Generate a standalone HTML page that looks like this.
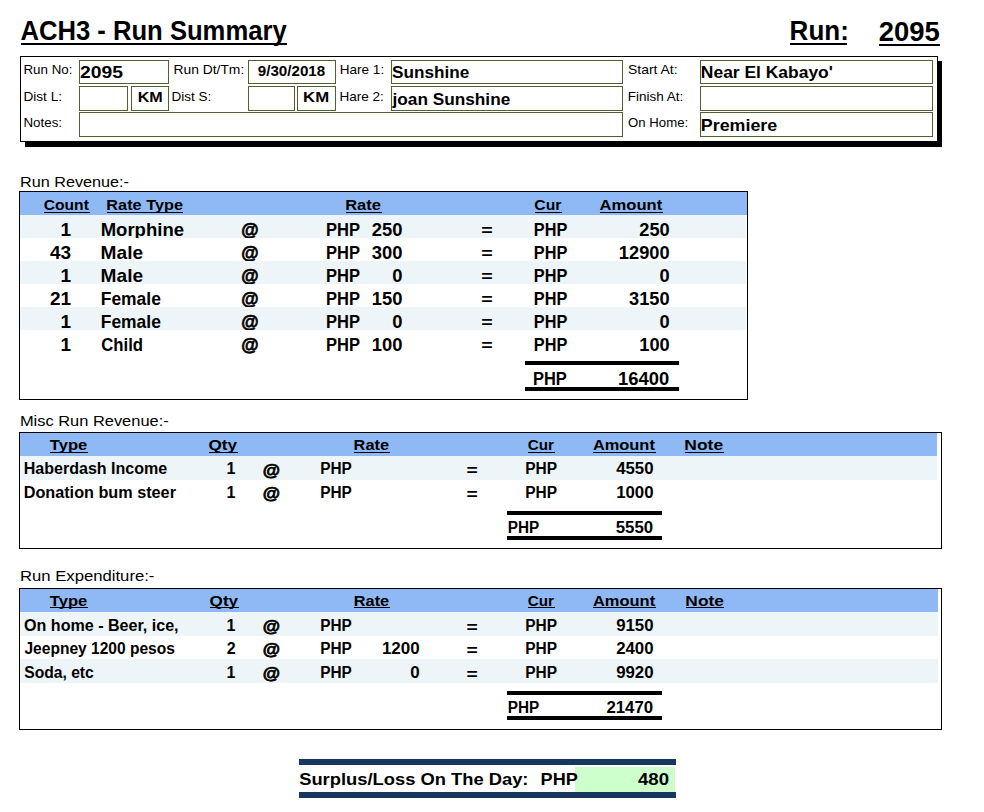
<!DOCTYPE html>
<html><head><meta charset="utf-8"><style>
html,body{margin:0;padding:0;background:#fff;}
body{width:984px;height:812px;overflow:hidden;}
svg{display:block;}
text{font-family:"Liberation Sans",sans-serif;fill:#000;white-space:pre;}
</style></head><body>
<svg width="984" height="812" viewBox="0 0 984 812" shape-rendering="crispEdges">
<text x="20.41" y="40" font-size="27" font-weight="bold" textLength="266.26" lengthAdjust="spacingAndGlyphs">ACH3 - Run Summary</text>
<rect x="21" y="43" width="266" height="2" fill="#000"/>
<text x="789.62" y="40" font-size="27" font-weight="bold" textLength="59.19" lengthAdjust="spacingAndGlyphs">Run:</text>
<rect x="790" y="43" width="57" height="2" fill="#000"/>
<text x="878.81" y="40.8" font-size="27" font-weight="bold" textLength="61.09" lengthAdjust="spacingAndGlyphs">2095</text>
<rect x="879" y="44" width="61" height="2" fill="#000"/>
<rect x="25" y="61" width="917" height="86" fill="#000"/>
<rect x="20" y="56" width="918" height="86" fill="#000"/>
<rect x="21" y="57" width="916" height="84" fill="#fff"/>
<rect x="79" y="60" width="90" height="1" fill="#4e6130"/>
<rect x="79" y="83" width="90" height="1" fill="#4e6130"/>
<rect x="79" y="60" width="1" height="24" fill="#4e6130"/>
<rect x="168" y="60" width="1" height="24" fill="#4e6130"/>
<rect x="79" y="86" width="49" height="1" fill="#4e6130"/>
<rect x="79" y="110" width="49" height="1" fill="#4e6130"/>
<rect x="79" y="86" width="1" height="25" fill="#4e6130"/>
<rect x="127" y="86" width="1" height="25" fill="#4e6130"/>
<rect x="131" y="86" width="38" height="1" fill="#4e6130"/>
<rect x="131" y="110" width="38" height="1" fill="#4e6130"/>
<rect x="131" y="86" width="1" height="25" fill="#4e6130"/>
<rect x="168" y="86" width="1" height="25" fill="#4e6130"/>
<rect x="79" y="112" width="544" height="1" fill="#4e6130"/>
<rect x="79" y="136" width="544" height="1" fill="#4e6130"/>
<rect x="79" y="112" width="1" height="25" fill="#4e6130"/>
<rect x="622" y="112" width="1" height="25" fill="#4e6130"/>
<rect x="248" y="60" width="88" height="1" fill="#4e6130"/>
<rect x="248" y="83" width="88" height="1" fill="#4e6130"/>
<rect x="248" y="60" width="1" height="24" fill="#4e6130"/>
<rect x="335" y="60" width="1" height="24" fill="#4e6130"/>
<rect x="248" y="86" width="47" height="1" fill="#4e6130"/>
<rect x="248" y="110" width="47" height="1" fill="#4e6130"/>
<rect x="248" y="86" width="1" height="25" fill="#4e6130"/>
<rect x="294" y="86" width="1" height="25" fill="#4e6130"/>
<rect x="297" y="86" width="39" height="1" fill="#4e6130"/>
<rect x="297" y="110" width="39" height="1" fill="#4e6130"/>
<rect x="297" y="86" width="1" height="25" fill="#4e6130"/>
<rect x="335" y="86" width="1" height="25" fill="#4e6130"/>
<rect x="391" y="60" width="232" height="1" fill="#4e6130"/>
<rect x="391" y="83" width="232" height="1" fill="#4e6130"/>
<rect x="391" y="60" width="1" height="24" fill="#4e6130"/>
<rect x="622" y="60" width="1" height="24" fill="#4e6130"/>
<rect x="391" y="86" width="232" height="1" fill="#4e6130"/>
<rect x="391" y="110" width="232" height="1" fill="#4e6130"/>
<rect x="391" y="86" width="1" height="25" fill="#4e6130"/>
<rect x="622" y="86" width="1" height="25" fill="#4e6130"/>
<rect x="700" y="60" width="233" height="1" fill="#4e6130"/>
<rect x="700" y="83" width="233" height="1" fill="#4e6130"/>
<rect x="700" y="60" width="1" height="24" fill="#4e6130"/>
<rect x="932" y="60" width="1" height="24" fill="#4e6130"/>
<rect x="700" y="86" width="233" height="1" fill="#4e6130"/>
<rect x="700" y="110" width="233" height="1" fill="#4e6130"/>
<rect x="700" y="86" width="1" height="25" fill="#4e6130"/>
<rect x="932" y="86" width="1" height="25" fill="#4e6130"/>
<rect x="700" y="112" width="233" height="1" fill="#4e6130"/>
<rect x="700" y="136" width="233" height="1" fill="#4e6130"/>
<rect x="700" y="112" width="1" height="25" fill="#4e6130"/>
<rect x="932" y="112" width="1" height="25" fill="#4e6130"/>
<text x="23.47" y="74" font-size="13" textLength="48.95" lengthAdjust="spacingAndGlyphs">Run No:</text>
<text x="23.45" y="100.8" font-size="13" textLength="38.62" lengthAdjust="spacingAndGlyphs">Dist L:</text>
<text x="23.47" y="127" font-size="13" textLength="38.55" lengthAdjust="spacingAndGlyphs">Notes:</text>
<text x="173.43" y="74" font-size="13" textLength="70.85" lengthAdjust="spacingAndGlyphs">Run Dt/Tm:</text>
<text x="171.46" y="100.8" font-size="13" textLength="39.74" lengthAdjust="spacingAndGlyphs">Dist S:</text>
<text x="339.76" y="74" font-size="13" textLength="44.42" lengthAdjust="spacingAndGlyphs">Hare 1:</text>
<text x="339.46" y="100.8" font-size="13" textLength="44.42" lengthAdjust="spacingAndGlyphs">Hare 2:</text>
<text x="628.04" y="74" font-size="13" textLength="49.54" lengthAdjust="spacingAndGlyphs">Start At:</text>
<text x="627.68" y="100.8" font-size="13" textLength="55.54" lengthAdjust="spacingAndGlyphs">Finish At:</text>
<text x="628.07" y="127" font-size="13" textLength="60.07" lengthAdjust="spacingAndGlyphs">On Home:</text>
<text x="80.09" y="77.8" font-size="17" font-weight="bold" textLength="42.91" lengthAdjust="spacingAndGlyphs">2095</text>
<text x="137.66" y="102" font-size="15.5" font-weight="bold" textLength="25.06" lengthAdjust="spacingAndGlyphs">KM</text>
<text x="303.12" y="102" font-size="15.5" font-weight="bold" textLength="26.04" lengthAdjust="spacingAndGlyphs">KM</text>
<text x="257.80" y="75.8" font-size="15" font-weight="bold" textLength="67.39" lengthAdjust="spacingAndGlyphs">9/30/2018</text>
<text x="392.00" y="77.8" font-size="17" font-weight="bold" textLength="77.22" lengthAdjust="spacingAndGlyphs">Sunshine</text>
<text x="392.55" y="104.7" font-size="17" font-weight="bold" textLength="117.71" lengthAdjust="spacingAndGlyphs">joan Sunshine</text>
<text x="700.85" y="77.8" font-size="17" font-weight="bold" textLength="132.06" lengthAdjust="spacingAndGlyphs">Near El Kabayo'</text>
<text x="700.82" y="130.8" font-size="17" font-weight="bold" textLength="76.43" lengthAdjust="spacingAndGlyphs">Premiere</text>
<text x="19.95" y="186.7" font-size="15" textLength="109.04" lengthAdjust="spacingAndGlyphs">Run Revenue:-</text>
<text x="19.93" y="425.8" font-size="15" textLength="148.77" lengthAdjust="spacingAndGlyphs">Misc Run Revenue:-</text>
<text x="19.91" y="580.8" font-size="15" textLength="134.51" lengthAdjust="spacingAndGlyphs">Run Expenditure:-</text>
<rect x="19" y="191" width="729" height="209" fill="#000"/>
<rect x="20" y="192" width="727" height="207" fill="#fff"/>
<rect x="20" y="192" width="727" height="23" fill="#8eb9f4"/>
<text x="43.67" y="209.8" font-size="15.5" font-weight="bold" textLength="45.22" lengthAdjust="spacingAndGlyphs">Count</text>
<rect x="44" y="212" width="46" height="1" fill="#000"/>
<text x="106.35" y="209.8" font-size="15.5" font-weight="bold" textLength="76.63" lengthAdjust="spacingAndGlyphs">Rate Type</text>
<rect x="107" y="212" width="76" height="1" fill="#000"/>
<text x="345.18" y="209.8" font-size="15.5" font-weight="bold" textLength="35.82" lengthAdjust="spacingAndGlyphs">Rate</text>
<rect x="346" y="212" width="36" height="1" fill="#000"/>
<text x="534.37" y="209.8" font-size="15.5" font-weight="bold" textLength="27.08" lengthAdjust="spacingAndGlyphs">Cur</text>
<rect x="535" y="212" width="27" height="1" fill="#000"/>
<text x="599.60" y="209.8" font-size="15.5" font-weight="bold" textLength="62.58" lengthAdjust="spacingAndGlyphs">Amount</text>
<rect x="600" y="212" width="63" height="1" fill="#000"/>
<rect x="20" y="215" width="726" height="23" fill="#edf5f8"/>
<text x="60.50" y="236.2" font-size="19" font-weight="bold">1</text>
<text x="100.68" y="236.2" font-size="19" font-weight="bold" textLength="83.32" lengthAdjust="spacingAndGlyphs">Morphine</text>
<text x="241.35" y="236.2" font-size="19" font-weight="bold" stroke="#000" stroke-width="0.7" textLength="17.33" lengthAdjust="spacingAndGlyphs">@</text>
<text x="326.01" y="236.2" font-size="19" font-weight="bold" textLength="33.98" lengthAdjust="spacingAndGlyphs">PHP</text>
<text x="371.65" y="236.2" font-size="19" font-weight="bold" textLength="30.75" lengthAdjust="spacingAndGlyphs">250</text>
<text x="481.34" y="235.79999999999998" font-size="17" font-weight="bold" textLength="11.45" lengthAdjust="spacingAndGlyphs">=</text>
<text x="533.83" y="236.2" font-size="19" font-weight="bold" textLength="33.46" lengthAdjust="spacingAndGlyphs">PHP</text>
<text x="639.26" y="236.2" font-size="19" font-weight="bold" textLength="30.43" lengthAdjust="spacingAndGlyphs">250</text>
<rect x="20" y="238" width="726" height="23" fill="#fff"/>
<text x="50.00" y="259.2" font-size="19" font-weight="bold">43</text>
<text x="100.64" y="259.2" font-size="19" font-weight="bold" textLength="42.48" lengthAdjust="spacingAndGlyphs">Male</text>
<text x="241.35" y="259.2" font-size="19" font-weight="bold" stroke="#000" stroke-width="0.7" textLength="17.33" lengthAdjust="spacingAndGlyphs">@</text>
<text x="326.01" y="259.2" font-size="19" font-weight="bold" textLength="33.98" lengthAdjust="spacingAndGlyphs">PHP</text>
<text x="371.65" y="259.2" font-size="19" font-weight="bold" textLength="30.75" lengthAdjust="spacingAndGlyphs">300</text>
<text x="481.34" y="258.8" font-size="17" font-weight="bold" textLength="11.45" lengthAdjust="spacingAndGlyphs">=</text>
<text x="533.83" y="259.2" font-size="19" font-weight="bold" textLength="33.46" lengthAdjust="spacingAndGlyphs">PHP</text>
<text x="618.86" y="259.2" font-size="19" font-weight="bold" textLength="50.72" lengthAdjust="spacingAndGlyphs">12900</text>
<rect x="20" y="261" width="726" height="23" fill="#edf5f8"/>
<text x="60.50" y="282.2" font-size="19" font-weight="bold">1</text>
<text x="100.64" y="282.2" font-size="19" font-weight="bold" textLength="42.48" lengthAdjust="spacingAndGlyphs">Male</text>
<text x="241.35" y="282.2" font-size="19" font-weight="bold" stroke="#000" stroke-width="0.7" textLength="17.33" lengthAdjust="spacingAndGlyphs">@</text>
<text x="326.01" y="282.2" font-size="19" font-weight="bold" textLength="33.98" lengthAdjust="spacingAndGlyphs">PHP</text>
<text x="392.14" y="282.2" font-size="19" font-weight="bold" textLength="10.25" lengthAdjust="spacingAndGlyphs">0</text>
<text x="481.34" y="281.8" font-size="17" font-weight="bold" textLength="11.45" lengthAdjust="spacingAndGlyphs">=</text>
<text x="533.83" y="282.2" font-size="19" font-weight="bold" textLength="33.46" lengthAdjust="spacingAndGlyphs">PHP</text>
<text x="659.54" y="282.2" font-size="19" font-weight="bold" textLength="10.14" lengthAdjust="spacingAndGlyphs">0</text>
<rect x="20" y="284" width="726" height="23" fill="#fff"/>
<text x="49.88" y="305.2" font-size="19" font-weight="bold">21</text>
<text x="100.75" y="305.2" font-size="19" font-weight="bold" textLength="60.10" lengthAdjust="spacingAndGlyphs">Female</text>
<text x="241.35" y="305.2" font-size="19" font-weight="bold" stroke="#000" stroke-width="0.7" textLength="17.33" lengthAdjust="spacingAndGlyphs">@</text>
<text x="326.01" y="305.2" font-size="19" font-weight="bold" textLength="33.98" lengthAdjust="spacingAndGlyphs">PHP</text>
<text x="371.65" y="305.2" font-size="19" font-weight="bold" textLength="30.75" lengthAdjust="spacingAndGlyphs">150</text>
<text x="481.34" y="304.8" font-size="17" font-weight="bold" textLength="11.45" lengthAdjust="spacingAndGlyphs">=</text>
<text x="533.83" y="305.2" font-size="19" font-weight="bold" textLength="33.46" lengthAdjust="spacingAndGlyphs">PHP</text>
<text x="629.06" y="305.2" font-size="19" font-weight="bold" textLength="40.58" lengthAdjust="spacingAndGlyphs">3150</text>
<rect x="20" y="307" width="726" height="23" fill="#edf5f8"/>
<text x="60.50" y="328.2" font-size="19" font-weight="bold">1</text>
<text x="100.75" y="328.2" font-size="19" font-weight="bold" textLength="60.10" lengthAdjust="spacingAndGlyphs">Female</text>
<text x="241.35" y="328.2" font-size="19" font-weight="bold" stroke="#000" stroke-width="0.7" textLength="17.33" lengthAdjust="spacingAndGlyphs">@</text>
<text x="326.01" y="328.2" font-size="19" font-weight="bold" textLength="33.98" lengthAdjust="spacingAndGlyphs">PHP</text>
<text x="392.14" y="328.2" font-size="19" font-weight="bold" textLength="10.25" lengthAdjust="spacingAndGlyphs">0</text>
<text x="481.34" y="327.8" font-size="17" font-weight="bold" textLength="11.45" lengthAdjust="spacingAndGlyphs">=</text>
<text x="533.83" y="328.2" font-size="19" font-weight="bold" textLength="33.46" lengthAdjust="spacingAndGlyphs">PHP</text>
<text x="659.54" y="328.2" font-size="19" font-weight="bold" textLength="10.14" lengthAdjust="spacingAndGlyphs">0</text>
<rect x="20" y="330" width="726" height="23" fill="#fff"/>
<text x="60.50" y="351.2" font-size="19" font-weight="bold">1</text>
<text x="101.24" y="351.2" font-size="19" font-weight="bold" textLength="41.85" lengthAdjust="spacingAndGlyphs">Child</text>
<text x="241.35" y="351.2" font-size="19" font-weight="bold" stroke="#000" stroke-width="0.7" textLength="17.33" lengthAdjust="spacingAndGlyphs">@</text>
<text x="326.01" y="351.2" font-size="19" font-weight="bold" textLength="33.98" lengthAdjust="spacingAndGlyphs">PHP</text>
<text x="371.65" y="351.2" font-size="19" font-weight="bold" textLength="30.75" lengthAdjust="spacingAndGlyphs">100</text>
<text x="481.34" y="350.8" font-size="17" font-weight="bold" textLength="11.45" lengthAdjust="spacingAndGlyphs">=</text>
<text x="533.83" y="351.2" font-size="19" font-weight="bold" textLength="33.46" lengthAdjust="spacingAndGlyphs">PHP</text>
<text x="639.26" y="351.2" font-size="19" font-weight="bold" textLength="30.43" lengthAdjust="spacingAndGlyphs">100</text>
<rect x="525" y="361" width="154" height="4" fill="#000"/>
<text x="532.92" y="385" font-size="19" font-weight="bold" textLength="33.82" lengthAdjust="spacingAndGlyphs">PHP</text>
<text x="618.10" y="385" font-size="19" font-weight="bold" textLength="51.09" lengthAdjust="spacingAndGlyphs">16400</text>
<rect x="525" y="387" width="154" height="4" fill="#000"/>
<rect x="19" y="432" width="923" height="117" fill="#000"/>
<rect x="20" y="433" width="921" height="115" fill="#fff"/>
<rect x="20" y="433" width="917" height="23" fill="#8eb9f4"/>
<text x="49.87" y="450.2" font-size="15.5" font-weight="bold" textLength="37.40" lengthAdjust="spacingAndGlyphs">Type</text>
<rect x="50" y="452" width="38" height="1" fill="#000"/>
<text x="208.51" y="450.2" font-size="15.5" font-weight="bold" textLength="28.59" lengthAdjust="spacingAndGlyphs">Qty</text>
<rect x="209" y="452" width="29" height="1" fill="#000"/>
<text x="353.64" y="450.2" font-size="15.5" font-weight="bold" textLength="35.56" lengthAdjust="spacingAndGlyphs">Rate</text>
<rect x="354" y="452" width="36" height="1" fill="#000"/>
<text x="527.69" y="450.2" font-size="15.5" font-weight="bold" textLength="26.20" lengthAdjust="spacingAndGlyphs">Cur</text>
<rect x="528" y="452" width="27" height="1" fill="#000"/>
<text x="592.90" y="450.2" font-size="15.5" font-weight="bold" textLength="61.97" lengthAdjust="spacingAndGlyphs">Amount</text>
<rect x="593" y="452" width="63" height="1" fill="#000"/>
<text x="684.37" y="450.2" font-size="15.5" font-weight="bold" textLength="38.77" lengthAdjust="spacingAndGlyphs">Note</text>
<rect x="685" y="452" width="39" height="1" fill="#000"/>
<rect x="20" y="456" width="917" height="24" fill="#edf5f8"/>
<rect x="20" y="480" width="917" height="24" fill="#fff"/>
<text x="23.70" y="474.0" font-size="16" font-weight="bold" textLength="143.54" lengthAdjust="spacingAndGlyphs">Haberdash Income</text>
<text x="226.40" y="474.0" font-size="16" font-weight="bold">1</text>
<text x="262.83" y="475.5" font-size="16" font-weight="bold" stroke="#000" stroke-width="0.7" textLength="17.25" lengthAdjust="spacingAndGlyphs">@</text>
<text x="320.24" y="474.0" font-size="16" font-weight="bold" textLength="31.56" lengthAdjust="spacingAndGlyphs">PHP</text>
<text x="466.45" y="476.0" font-size="16" font-weight="bold" textLength="11.27" lengthAdjust="spacingAndGlyphs">=</text>
<text x="525.23" y="474.0" font-size="16" font-weight="bold" textLength="31.77" lengthAdjust="spacingAndGlyphs">PHP</text>
<text x="616.15" y="474.0" font-size="16" font-weight="bold" textLength="37.37" lengthAdjust="spacingAndGlyphs">4550</text>
<text x="23.69" y="497.9" font-size="16" font-weight="bold" textLength="152.25" lengthAdjust="spacingAndGlyphs">Donation bum steer</text>
<text x="226.40" y="497.9" font-size="16" font-weight="bold">1</text>
<text x="262.83" y="499.4" font-size="16" font-weight="bold" stroke="#000" stroke-width="0.7" textLength="17.25" lengthAdjust="spacingAndGlyphs">@</text>
<text x="320.24" y="497.9" font-size="16" font-weight="bold" textLength="31.56" lengthAdjust="spacingAndGlyphs">PHP</text>
<text x="466.45" y="499.9" font-size="16" font-weight="bold" textLength="11.27" lengthAdjust="spacingAndGlyphs">=</text>
<text x="525.23" y="497.9" font-size="16" font-weight="bold" textLength="31.77" lengthAdjust="spacingAndGlyphs">PHP</text>
<text x="616.15" y="497.9" font-size="16" font-weight="bold" textLength="37.37" lengthAdjust="spacingAndGlyphs">1000</text>
<rect x="507" y="511" width="155" height="4" fill="#000"/>
<text x="507.74" y="532.5" font-size="16" font-weight="bold" textLength="31.46" lengthAdjust="spacingAndGlyphs">PHP</text>
<text x="615.75" y="532.5" font-size="16" font-weight="bold" textLength="37.37" lengthAdjust="spacingAndGlyphs">5550</text>
<rect x="507" y="536" width="155" height="4" fill="#000"/>
<rect x="19" y="588" width="923" height="142" fill="#000"/>
<rect x="20" y="589" width="921" height="140" fill="#fff"/>
<rect x="20" y="589" width="918" height="23" fill="#8eb9f4"/>
<text x="49.87" y="605.6" font-size="15.5" font-weight="bold" textLength="37.40" lengthAdjust="spacingAndGlyphs">Type</text>
<rect x="50" y="607" width="38" height="1" fill="#000"/>
<text x="209.61" y="605.6" font-size="15.5" font-weight="bold" textLength="28.49" lengthAdjust="spacingAndGlyphs">Qty</text>
<rect x="210" y="607" width="29" height="1" fill="#000"/>
<text x="353.74" y="605.6" font-size="15.5" font-weight="bold" textLength="35.45" lengthAdjust="spacingAndGlyphs">Rate</text>
<rect x="354" y="607" width="36" height="1" fill="#000"/>
<text x="527.69" y="605.6" font-size="15.5" font-weight="bold" textLength="26.20" lengthAdjust="spacingAndGlyphs">Cur</text>
<rect x="528" y="607" width="27" height="1" fill="#000"/>
<text x="592.90" y="605.6" font-size="15.5" font-weight="bold" textLength="62.28" lengthAdjust="spacingAndGlyphs">Amount</text>
<rect x="593" y="607" width="63" height="1" fill="#000"/>
<text x="685.38" y="605.6" font-size="15.5" font-weight="bold" textLength="38.50" lengthAdjust="spacingAndGlyphs">Note</text>
<rect x="686" y="607" width="38" height="1" fill="#000"/>
<rect x="20" y="612" width="918" height="24" fill="#edf5f8"/>
<rect x="20" y="636" width="918" height="23" fill="#fff"/>
<rect x="20" y="659" width="918" height="24" fill="#edf5f8"/>
<text x="24.07" y="630.5" font-size="16" font-weight="bold" textLength="154.51" lengthAdjust="spacingAndGlyphs">On home - Beer, ice,</text>
<text x="226.40" y="630.5" font-size="16" font-weight="bold">1</text>
<text x="262.83" y="632.0" font-size="16" font-weight="bold" stroke="#000" stroke-width="0.7" textLength="17.25" lengthAdjust="spacingAndGlyphs">@</text>
<text x="320.24" y="630.5" font-size="16" font-weight="bold" textLength="31.56" lengthAdjust="spacingAndGlyphs">PHP</text>
<text x="466.45" y="632.5" font-size="16" font-weight="bold" textLength="11.27" lengthAdjust="spacingAndGlyphs">=</text>
<text x="525.23" y="630.5" font-size="16" font-weight="bold" textLength="31.77" lengthAdjust="spacingAndGlyphs">PHP</text>
<text x="616.15" y="630.5" font-size="16" font-weight="bold" textLength="37.37" lengthAdjust="spacingAndGlyphs">9150</text>
<text x="24.46" y="653.7" font-size="16" font-weight="bold" textLength="150.37" lengthAdjust="spacingAndGlyphs">Jeepney 1200 pesos</text>
<text x="226.65" y="653.7" font-size="16" font-weight="bold">2</text>
<text x="262.83" y="655.2" font-size="16" font-weight="bold" stroke="#000" stroke-width="0.7" textLength="17.25" lengthAdjust="spacingAndGlyphs">@</text>
<text x="320.24" y="653.7" font-size="16" font-weight="bold" textLength="31.56" lengthAdjust="spacingAndGlyphs">PHP</text>
<text x="381.90" y="653.7" font-size="16" font-weight="bold" textLength="37.73" lengthAdjust="spacingAndGlyphs">1200</text>
<text x="466.45" y="655.7" font-size="16" font-weight="bold" textLength="11.27" lengthAdjust="spacingAndGlyphs">=</text>
<text x="525.23" y="653.7" font-size="16" font-weight="bold" textLength="31.77" lengthAdjust="spacingAndGlyphs">PHP</text>
<text x="616.15" y="653.7" font-size="16" font-weight="bold" textLength="37.37" lengthAdjust="spacingAndGlyphs">2400</text>
<text x="24.21" y="677.5" font-size="16" font-weight="bold" textLength="69.59" lengthAdjust="spacingAndGlyphs">Soda, etc</text>
<text x="226.40" y="677.5" font-size="16" font-weight="bold">1</text>
<text x="262.83" y="679.0" font-size="16" font-weight="bold" stroke="#000" stroke-width="0.7" textLength="17.25" lengthAdjust="spacingAndGlyphs">@</text>
<text x="320.24" y="677.5" font-size="16" font-weight="bold" textLength="31.56" lengthAdjust="spacingAndGlyphs">PHP</text>
<text x="410.25" y="677.5" font-size="16" font-weight="bold" textLength="9.43" lengthAdjust="spacingAndGlyphs">0</text>
<text x="466.45" y="679.5" font-size="16" font-weight="bold" textLength="11.27" lengthAdjust="spacingAndGlyphs">=</text>
<text x="525.23" y="677.5" font-size="16" font-weight="bold" textLength="31.77" lengthAdjust="spacingAndGlyphs">PHP</text>
<text x="616.15" y="677.5" font-size="16" font-weight="bold" textLength="37.37" lengthAdjust="spacingAndGlyphs">9920</text>
<rect x="507" y="691" width="155" height="4" fill="#000"/>
<text x="507.74" y="713" font-size="16" font-weight="bold" textLength="31.46" lengthAdjust="spacingAndGlyphs">PHP</text>
<text x="606.43" y="713" font-size="16" font-weight="bold" textLength="46.72" lengthAdjust="spacingAndGlyphs">21470</text>
<rect x="507" y="716" width="155" height="4" fill="#000"/>
<rect x="299" y="759" width="377" height="6" fill="#17375e"/>
<rect x="575" y="767" width="100" height="25" fill="#ccffcc"/>
<rect x="299" y="792" width="377" height="6" fill="#17375e"/>
<text x="299.16" y="785.3" font-size="17" font-weight="bold" textLength="229.33" lengthAdjust="spacingAndGlyphs">Surplus/Loss On The Day:</text>
<text x="540.60" y="785" font-size="17" font-weight="bold" textLength="37.21" lengthAdjust="spacingAndGlyphs">PHP</text>
<text x="638.03" y="785" font-size="17" font-weight="bold" textLength="31.08" lengthAdjust="spacingAndGlyphs">480</text>
</svg></body></html>
